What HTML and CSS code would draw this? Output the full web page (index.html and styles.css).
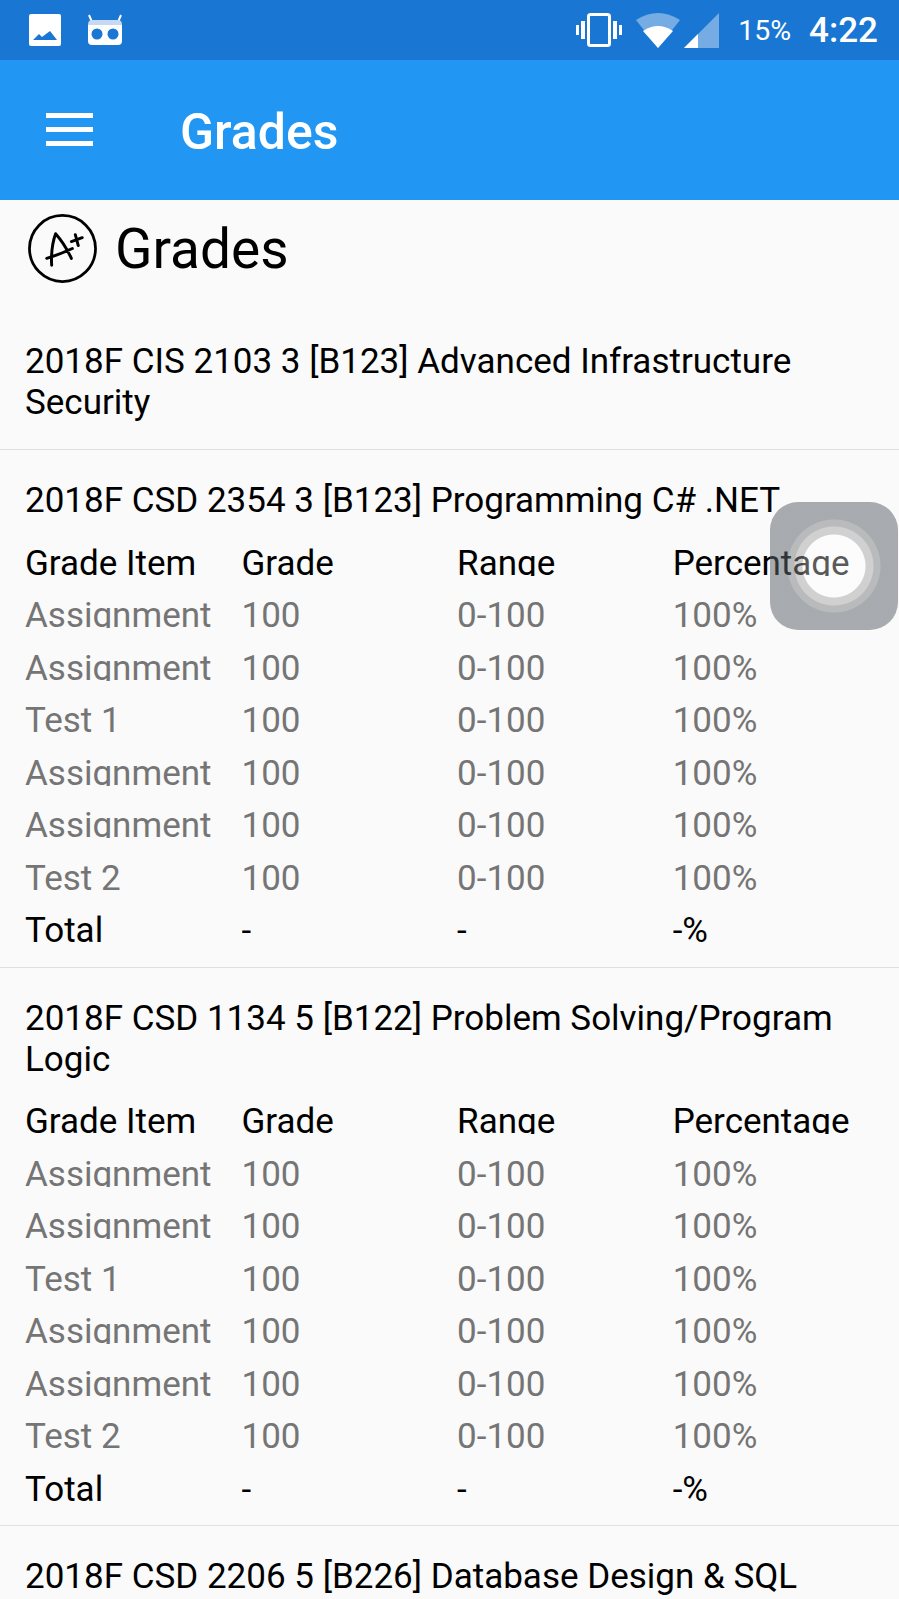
FILE: index.html
```html
<!DOCTYPE html>
<html lang="en">
<head>
  <meta charset="UTF-8">
  <title>Grades</title>
  <link rel="stylesheet" href="styles.css">
</head>
<body>

<div class="status-bar">
  <svg class="icon-image" width="32" height="32" viewBox="0 0 32 32">
    <rect width="32" height="32" rx="2" fill="#fff"/>
    <path d="M4 26 L10 20 L13 23 L21 17 L28 26 Z" fill="#1976d2"/>
  </svg>
  <svg class="icon-robot" width="36" height="32" viewBox="0 0 36 32">
    <path d="M2 1 L5 8 M34 1 L31 8" stroke="#fff" stroke-width="2" fill="none"/>
    <path d="M5 6 H31 Q35 6 35 11 H1 Q1 6 5 6 Z" fill="#c7d9f2"/>
    <path d="M1 11 H35 V27 Q35 31 31 31 H5 Q1 31 1 27 Z" fill="#fff"/>
    <circle cx="10" cy="20" r="5.500" fill="#1976d2"/>
    <circle cx="26" cy="20" r="5.500" fill="#1976d2"/>
  </svg>
  <div class="status-right">
    <svg width="46" height="34" viewBox="0 0 46 34">
      <rect x="12.500" y="1.500" width="21" height="31" rx="2" fill="none" stroke="#fff" stroke-width="3"/>
      <rect x="5" y="8" width="4" height="18" fill="#fff"/>
      <rect x="37" y="8" width="4" height="18" fill="#fff"/>
      <rect x="0" y="12" width="3" height="10" fill="#fff"/>
      <rect x="43" y="12" width="3" height="10" fill="#fff"/>
    </svg>
    <svg class="icon-wifi" width="44" height="35" viewBox="0 0 44 35">
      <path d="M0 7 Q22 -7 44 7 L22 35 Z" fill="#fff" fill-opacity=".4"/>
      <path d="M7 18 Q22 8 37 18 L22 35 Z" fill="#fff"/>
    </svg>
    <svg class="icon-signal" width="35" height="35" viewBox="0 0 35 35">
      <path d="M0 35 L35 0 V35 Z" fill="#fff" fill-opacity=".4"/>
      <path d="M0 35 L14 21 V35 Z" fill="#fff"/>
    </svg>
    <span class="battery">15%</span>
    <span class="clock">4:22</span>
  </div>
</div>

<div class="toolbar">
  <div class="menu-btn"><span></span><span></span><span></span></div>
  <div class="toolbar-title">Grades</div>
</div>

<div class="page-head">
  <svg width="69" height="69" viewBox="0 0 70 70">
    <circle cx="35" cy="35" r="33.500" fill="none" stroke="#000" stroke-width="2.800"/>
    <path d="M24 52 Q23 34 28 20 Q37 30 44 45 M19 45 Q32 41 45 35 M44 28 L55 24 M48 21 L51 32" fill="none" stroke="#000" stroke-width="3" stroke-linecap="round" stroke-linejoin="round"/>
  </svg>
  <h1>Grades</h1>
</div>

<div class="course first">
  <div class="course-name">2018F CIS 2103 3 [B123] Advanced Infrastructure Security</div>
</div>

<div class="course">
  <div class="course-name">2018F CSD 2354 3 [B123] Programming C# .NET</div>
  <div class="grades">
    <div class="row head"><div>Grade Item</div><div>Grade</div><div>Range</div><div>Percentage</div></div>
    <div class="row"><div>Assignment</div><div>100</div><div>0-100</div><div>100%</div></div>
    <div class="row"><div>Assignment</div><div>100</div><div>0-100</div><div>100%</div></div>
    <div class="row"><div>Test 1</div><div>100</div><div>0-100</div><div>100%</div></div>
    <div class="row"><div>Assignment</div><div>100</div><div>0-100</div><div>100%</div></div>
    <div class="row"><div>Assignment</div><div>100</div><div>0-100</div><div>100%</div></div>
    <div class="row"><div>Test 2</div><div>100</div><div>0-100</div><div>100%</div></div>
    <div class="row head"><div>Total</div><div>-</div><div>-</div><div>-%</div></div>
  </div>
</div>

<div class="course">
  <div class="course-name">2018F CSD 1134 5 [B122] Problem Solving/Program Logic</div>
  <div class="grades">
    <div class="row head"><div>Grade Item</div><div>Grade</div><div>Range</div><div>Percentage</div></div>
    <div class="row"><div>Assignment</div><div>100</div><div>0-100</div><div>100%</div></div>
    <div class="row"><div>Assignment</div><div>100</div><div>0-100</div><div>100%</div></div>
    <div class="row"><div>Test 1</div><div>100</div><div>0-100</div><div>100%</div></div>
    <div class="row"><div>Assignment</div><div>100</div><div>0-100</div><div>100%</div></div>
    <div class="row"><div>Assignment</div><div>100</div><div>0-100</div><div>100%</div></div>
    <div class="row"><div>Test 2</div><div>100</div><div>0-100</div><div>100%</div></div>
    <div class="row head"><div>Total</div><div>-</div><div>-</div><div>-%</div></div>
  </div>
</div>

<div class="course">
  <div class="course-name">2018F CSD 2206 5 [B226] Database Design &amp; SQL</div>
</div>

<!-- floating assistive button -->
<div class="assistive"></div>

</body>
</html>
```

FILE: styles.css
```css
html, body {
  margin: 0;
  padding: 0;
}

body {
  height: 1599px;
  overflow: hidden;
  background-color: #fafafa;
  font-family: Roboto, "Noto Sans", sans-serif;
  color: #000;
}

.status-bar {
  height: 60px;
  background-color: #1976d2;
  color: #fff;
  display: flex;
  align-items: center;
  padding: 0 21px 0 29px;
}

.icon-robot {
  margin-left: 26px;
}

.status-right {
  margin-left: auto;
  display: flex;
  align-items: center;
}

.icon-wifi {
  margin-left: 14px;
}

.icon-signal {
  margin-left: 4px;
}

.battery {
  margin-left: 19px;
  font-size: 28.500px;
}

.clock {
  margin-left: 18px;
  font-size: 35px;
  font-weight: 500;
}

.toolbar {
  height: 140px;
  background-color: #2196f3;
  color: #fff;
  display: flex;
  align-items: center;
  padding-left: 46px;
}

.menu-btn {
  width: 47px;
  margin-bottom: 2px;
  display: flex;
  flex-direction: column;
  gap: 9px;
}

.menu-btn span {
  height: 5px;
  background-color: #fff;
}

.toolbar-title {
  margin-left: 87px;
  padding-top: 3px;
  font-size: 50px;
  font-weight: 500;
}

.page-head {
  display: flex;
  align-items: center;
  gap: 18px;
  padding-left: 28px;
  height: 96px;
}

.page-head h1 {
  margin: 0;
  padding-top: 2px;
  font-size: 55px;
  font-weight: 400;
}

.course {
  padding: 0 25px 3px;
  border-bottom: 1px solid #e0e0e0;
}

.course.first {
  padding-top: 45px;
  padding-bottom: 19px;
}

.course-name {
  font-size: 35px;
  line-height: 41px;
  padding-top: 30px;
  padding-bottom: 7px;
}

.course.first .course-name {
  padding-top: 0;
}

.grades {
  padding-top: 15.500px;
}

.row {
  display: grid;
  grid-template-columns: 216.5px repeat(3, 215.6px);
  height: 52.500px;
  font-size: 35px;
  line-height: 39px;
  color: #757575;
}

.row div {
  height: 32px;
  overflow: hidden;
  white-space: nowrap;
}

.row.head {
  color: #000;
}

.assistive {
  position: absolute;
  left: 770px;
  top: 502px;
  width: 128px;
  height: 128px;
  border-radius: 28px;
  background-image: radial-gradient(circle at center,
    rgba(255, 255, 255, 0.35) 31px,
    rgba(155, 155, 155, 0.44) 32px,
    rgba(155, 155, 155, 0.44) 39px,
    rgba(118, 120, 122, 0.49) 40px,
    rgba(118, 120, 122, 0.49) 46px,
    rgba(92, 98, 105, 0.52) 47px);
}
```
